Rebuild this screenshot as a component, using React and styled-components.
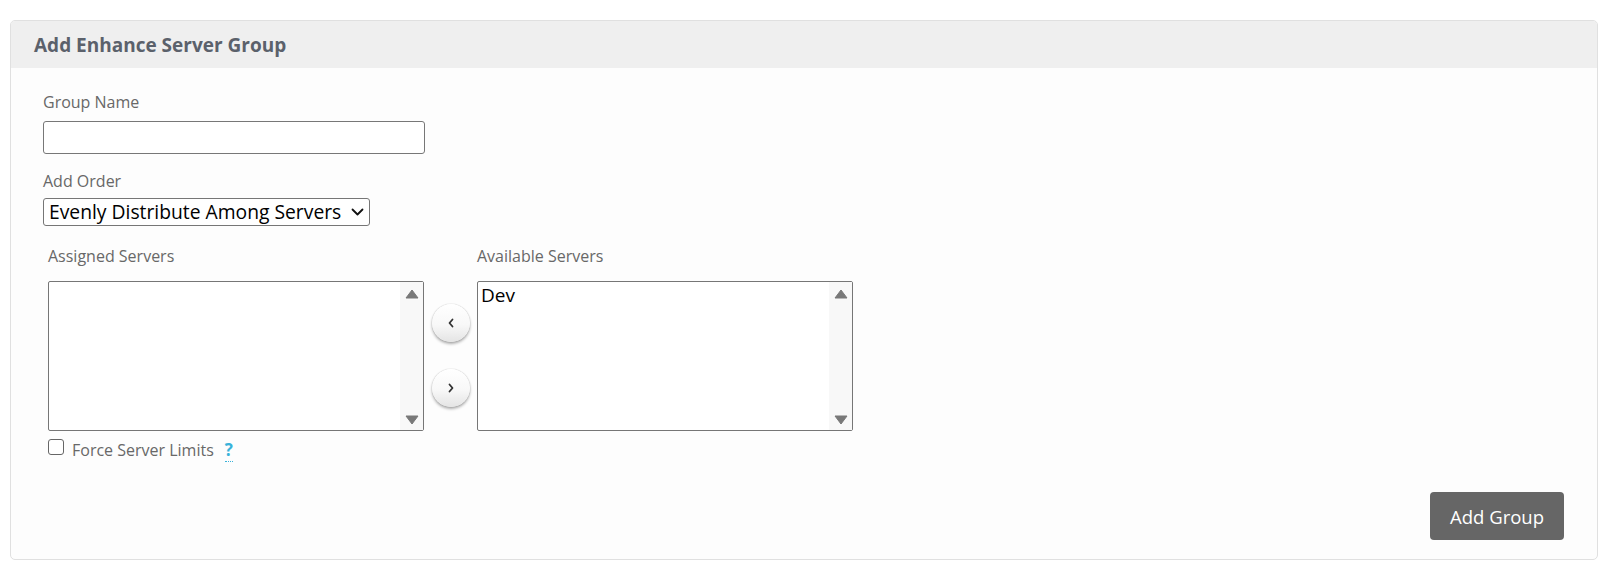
import React, { useState } from "react";
import styled, { createGlobalStyle } from "styled-components";

const GlobalStyle = createGlobalStyle`
  html, body {
    margin: 0;
    padding: 0;
    background: #fff;
    font-family: "Open Sans", "Noto Sans", "Liberation Sans", sans-serif;
  }
  * { box-sizing: border-box; }
`;

const Page = styled.div`
  padding: 20px 10px 24px 10px;
`;

const Panel = styled.section`
  border: 1px solid #e0e0e0;
  border-radius: 5px;
  background: #fdfdfd;
  overflow: hidden;
`;

const PanelHeader = styled.header`
  height: 47px;
  background: #efefef;
  display: flex;
  align-items: center;
  padding: 0 23px;
  font-size: 19px;
  font-weight: 700;
  color: #5b616b;
`;

const PanelBody = styled.div`
  padding: 23px 32px 19px 32px;
  display: flex;
  flex-direction: column;
`;

const Field = styled.div`
  display: flex;
  flex-direction: column;
  align-items: flex-start;
  margin-bottom: ${(p) => p.$mb || 0}px;
`;

const Label = styled.label`
  font-size: 16px;
  line-height: 22px;
  color: #686868;
  margin-bottom: ${(p) => p.$mb || 8}px;
`;

const TextInput = styled.input`
  width: 382px;
  height: 33px;
  border: 1px solid #777;
  border-radius: 3px;
  background: #fff;
  padding: 0 8px;
  font-size: 16px;
  font-family: inherit;
`;

const SelectBox = styled.div`
  display: inline-flex;
  align-items: center;
  height: 28px;
  border: 1px solid #767676;
  border-radius: 3px;
  background: #fff;
  padding: 0 5px 0 5px;
  gap: 9px;
`;

const Select = styled.select`
  appearance: none;
  border: none;
  outline: none;
  background: transparent;
  color: #000;
  font-size: 19.3px;
  line-height: 26px;
  height: 26px;
  font-family: "Open Sans", "Noto Sans", sans-serif;
  padding: 0;
  margin: 0;
`;

const Transfer = styled.div`
  display: grid;
  grid-template-columns: 376px 53px 376px;
  grid-template-rows: auto auto;
  padding-left: 5px;
`;

const ListBox = styled.div`
  height: 150px;
  border: 1px solid #767676;
  border-radius: 2px;
  background: #fff;
  display: flex;
`;

const Options = styled.ul`
  flex: 1;
  list-style: none;
  margin: 0;
  padding: 1px 3px;
  font-size: 19px;
  line-height: 24px;
  color: #000;
`;

const ScrollTrack = styled.div`
  width: 23px;
  background: #f8f8f8;
  display: flex;
  flex-direction: column;
  justify-content: space-between;
  align-items: center;
  padding: 7px 0 5px;
`;

const Arrows = styled.div`
  display: flex;
  flex-direction: column;
  align-items: center;
  padding-top: 23px;
  gap: 27px;
`;

const RoundButton = styled.button`
  width: 38px;
  height: 38px;
  border-radius: 50%;
  border: none;
  background: linear-gradient(180deg, #ffffff 0%, #f8f8f8 55%, #e4e4e4 100%);
  box-shadow: 0 2px 3px rgba(0, 0, 0, 0.32), 0 0 1px rgba(0, 0, 0, 0.35);
  display: flex;
  align-items: center;
  justify-content: center;
  padding: 0;
  cursor: pointer;
`;

const CheckRow = styled.div`
  display: flex;
  align-items: flex-start;
  height: 22px;
  margin-top: 8px;
  padding-left: 5px;
  font-size: 16px;
  line-height: 22px;
  color: #686868;
`;

const Checkbox = styled.span`
  width: 16px;
  height: 16px;
  border: 1px solid #666;
  border-radius: 3px;
  background: #fff;
  margin-right: 8px;
`;

const Help = styled.span`
  margin-left: 11px;
  color: #3ab2d9;
  font-weight: 700;
  font-size: 17px;
  line-height: 22px;
  border-bottom: 1px dotted #3ab2d9;
`;

const Footer = styled.div`
  display: flex;
  justify-content: flex-end;
  margin-top: 31px;
  padding-right: 1px;
`;

const PrimaryButton = styled.button`
  height: 48px;
  padding: 0 20px;
  border: none;
  border-radius: 4px;
  background: #666;
  color: #fff;
  font-size: 18.5px;
  font-family: inherit;
  cursor: pointer;
`;

const Tri = ({ up }) => (
  <svg width="14" height="10" viewBox="0 0 14 10">
    <path
      d={up ? "M7 1 L13 9 L1 9 Z" : "M1 1 L13 1 L7 9 Z"}
      fill="#787878"
      stroke="#787878"
      strokeWidth="1"
      strokeLinejoin="round"
    />
  </svg>
);

const Chevron = ({ left }) => (
  <svg width="12" height="12" viewBox="0 0 12 12">
    <path
      d={left ? "M7.5 2.5 L4.5 6 L7.5 9.5" : "M4.5 2.5 L7.5 6 L4.5 9.5"}
      fill="none"
      stroke="#333"
      strokeWidth="1.8"
      strokeLinecap="round"
      strokeLinejoin="round"
    />
  </svg>
);

const SelectCaret = () => (
  <svg width="13" height="8" viewBox="0 0 13 8">
    <path
      d="M1.5 1.5 L6.5 6.5 L11.5 1.5"
      fill="none"
      stroke="#111"
      strokeWidth="1.8"
      strokeLinecap="round"
      strokeLinejoin="round"
    />
  </svg>
);

const List = ({ items }) => (
  <ListBox>
    <Options>
      {items.map((it) => (
        <li key={it}>{it}</li>
      ))}
    </Options>
    <ScrollTrack>
      <Tri up />
      <Tri />
    </ScrollTrack>
  </ListBox>
);

export default function App() {
  const [name, setName] = useState("");
  return (
    <Page>
      <GlobalStyle />
      <Panel>
        <PanelHeader>Add Enhance Server Group</PanelHeader>
        <PanelBody>
          <Field $mb={16}>
            <Label $mb={8}>Group Name</Label>
            <TextInput value={name} onChange={(e) => setName(e.target.value)} />
          </Field>
          <Field $mb={19}>
            <Label $mb={6}>Add Order</Label>
            <SelectBox>
              <Select defaultValue="even">
                <option value="even">Evenly Distribute Among Servers</option>
              </Select>
              <SelectCaret />
            </SelectBox>
          </Field>
          <Transfer>
            <Label $mb={14}>Assigned Servers</Label>
            <span />
            <Label $mb={14}>Available Servers</Label>
            <List items={[]} />
            <Arrows>
              <RoundButton aria-label="Assign">
                <Chevron left />
              </RoundButton>
              <RoundButton aria-label="Unassign">
                <Chevron />
              </RoundButton>
            </Arrows>
            <List items={["Dev"]} />
          </Transfer>
          <CheckRow>
            <Checkbox />
            <span>Force Server Limits</span>
            <Help>?</Help>
          </CheckRow>
          <Footer>
            <PrimaryButton>Add Group</PrimaryButton>
          </Footer>
        </PanelBody>
      </Panel>
    </Page>
  );
}
